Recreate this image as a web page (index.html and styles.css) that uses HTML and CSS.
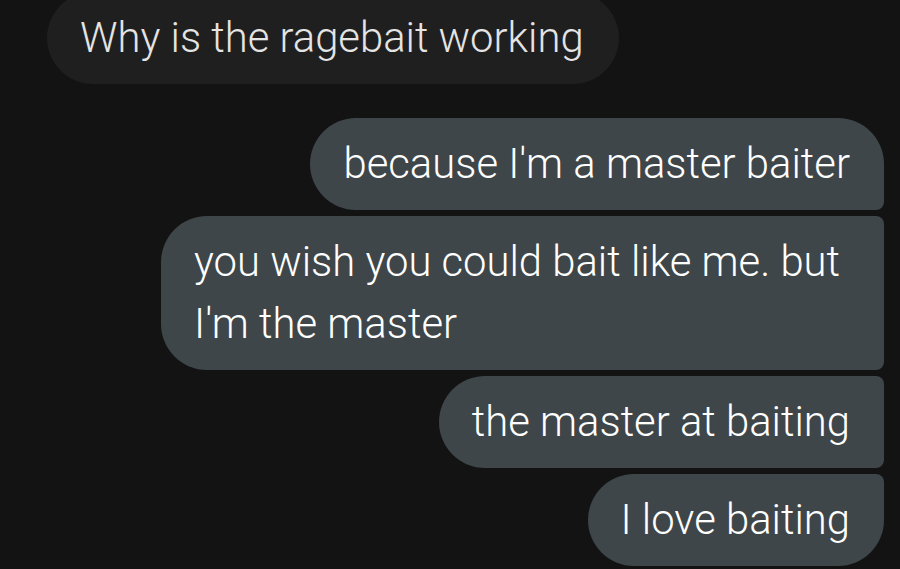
FILE: index.html
```html
<!DOCTYPE html>
<html>
<head>
<meta charset="utf-8">
<link rel="stylesheet" href="styles.css">
</head>
<body>
<div class="chat">
  <div class="bubble incoming">Why is the ragebait working</div>
  <div class="group">
    <div class="bubble out first">because I'm a master baiter</div>
    <div class="bubble out mid">you wish you could bait like me. but I'm the master</div>
    <div class="bubble out mid">the master at baiting</div>
    <div class="bubble out last">I love baiting</div>
  </div>
</div>
</body>
</html>
```
FILE: styles.css
```css
html, body {
  margin: 0;
  padding: 0;
  background: #131313;
  height: 100%;
  overflow: hidden;
}
.chat {
  display: flex;
  flex-direction: column;
  padding: 0 16px 0 47px;
  font-family: Roboto, "Noto Sans", sans-serif;
  font-weight: 350;
  font-size: 41.8px;
  line-height: 62px;
}
.bubble {
  box-sizing: border-box;
  max-width: 723px;
  padding: 15px 34px 15px 33px;
  border-radius: 46px;
}
.incoming {
  align-self: flex-start;
  margin-top: -8px;
  padding-right: 35px;
  background: #1f1f1f;
  color: #e4e4e4;
}
.group {
  margin-top: 34px;
  display: flex;
  flex-direction: column;
  align-items: flex-end;
  gap: 6px;
}
.out {
  background: #3e4649;
  color: #ffffff;
}
.first {
  border-radius: 46px 46px 8px 46px;
}
.mid {
  border-radius: 46px 8px 8px 46px;
}
.last {
  border-radius: 46px 8px 46px 46px;
}
```
